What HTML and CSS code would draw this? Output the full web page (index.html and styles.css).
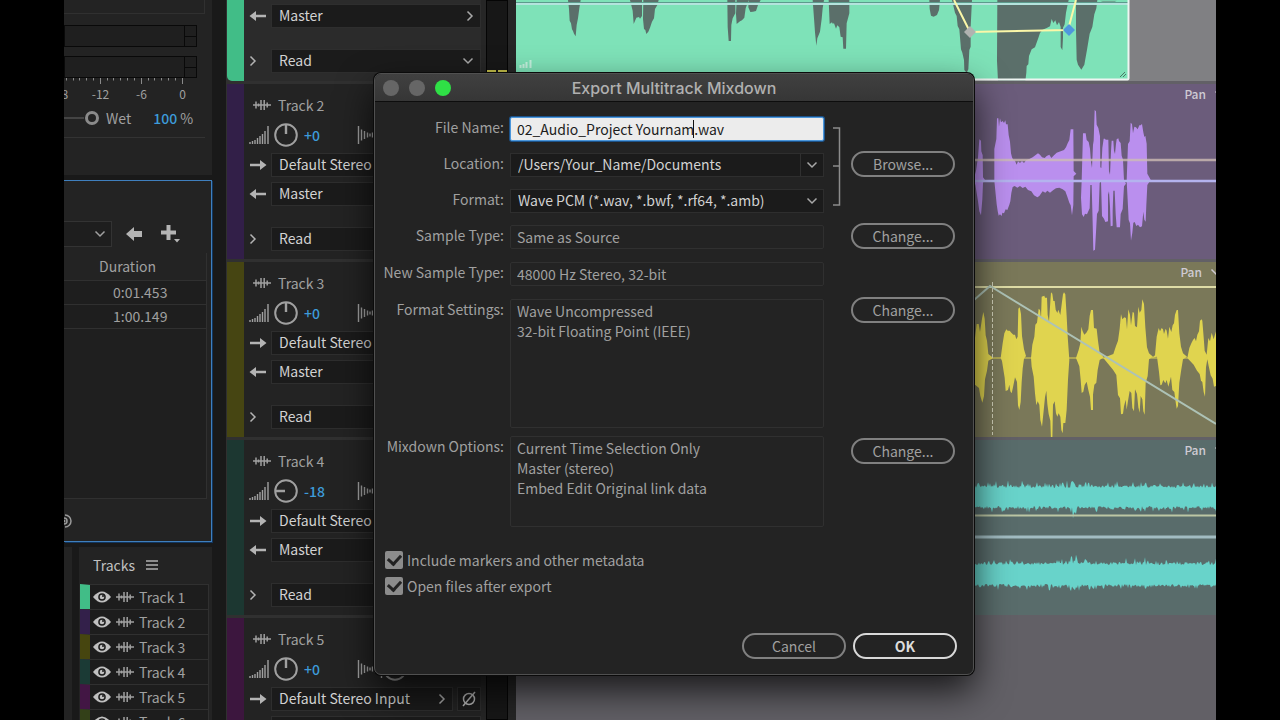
FILE: index.html
```html
<!DOCTYPE html>
<html lang="en">
<head>
    <meta charset="utf-8">
    <title>Export Multitrack Mixdown</title>
    <link rel="stylesheet" href="styles.css">
</head>
<body>
    <!-- shared icons -->
    <svg class="symbols">
        <symbol id="chev-down" viewBox="0 0 12 8"><path d="M1.500 1.500L6 6L10.500 1.500" fill="none" stroke="currentColor" stroke-width="1.500"/></symbol>
        <symbol id="chev-right" viewBox="0 0 8 12"><path d="M1.500 1.500L6 6L1.500 10.500" fill="none" stroke="currentColor" stroke-width="1.500"/></symbol>
        <symbol id="arrow-in" viewBox="0 0 18 12"><path d="M1 4.800h10V1l6.500 5-6.500 5V7.200H1z" fill="currentColor"/></symbol>
        <symbol id="arrow-out" viewBox="0 0 18 12"><path d="M17 4.800H7V1L.500 6 7 11V7.200h10z" fill="currentColor"/></symbol>
        <symbol id="wave" viewBox="0 0 18 12"><path d="M0 6h18M3 2.500v7M5.500 4.500v3M8 1v10M11.200 1v10M14.200 3.500v5" fill="none" stroke="currentColor" stroke-width="1.500"/></symbol>
        <symbol id="volume" viewBox="0 0 20 18"><path d="M1 18v-2M3.500 18v-3M6 18v-4M8.500 18v-6M11 18v-8M13.500 18v-10M16 18v-13M19 18V0" fill="none" stroke="currentColor" stroke-width="1.400"/></symbol>
        <symbol id="pan" viewBox="0 0 26 18"><path d="M1.500 0v18M4.500 3.500v11M7.500 5v8M10.500 6.500v5M13 7.500v3M15.500 6.500v5M18.500 5v8M21.500 3.500v11M24.500 0v18" fill="none" stroke="currentColor" stroke-width="1.400"/></symbol>
        <symbol id="knob" viewBox="0 0 24 24"><circle cx="12" cy="12" r="10.800" fill="none" stroke="currentColor" stroke-width="2"/><path d="M12 2v9" stroke="currentColor" stroke-width="2.400"/></symbol>
        <symbol id="eye" viewBox="0 0 18 12"><path d="M0 6Q9-5 18 6Q9 17 0 6z" fill="currentColor"/><circle cx="9" cy="6" r="3.800" fill="#1d1d1d"/><circle cx="9" cy="6" r="2.300" fill="currentColor"/><circle cx="10" cy="5" r="1" fill="#1d1d1d"/></symbol>
        <symbol id="phase" viewBox="0 0 16 16"><ellipse cx="8" cy="8" rx="5.500" ry="5.500" fill="none" stroke="currentColor" stroke-width="1.500"/><path d="M2 15L14 1" stroke="currentColor" stroke-width="1.500"/></symbol>
    </svg>

    <div class="app">
        <div class="sidebar">
            <section class="effects">
                <div class="effects-box"></div>
                <div class="level"><span></span></div>
                <div class="level"><span></span></div>
                <svg class="ticks" viewBox="0 0 134 6" width="134" height="6">
                    <path d="M2.500 0v2.500M9.500 0v2.500M15.500 0v2.500M22.500 0v2.500M29.500 0v2.500M43.500 0v2.500M49.500 0v2.500M56.500 0v2.500M63.500 0v2.500M70.500 0v2.500M84.500 0v2.500M90.500 0v2.500M97.500 0v2.500M104.500 0v2.500M111.500 0v2.500M36.500 0v6M77.500 0v6M118.500 0v6" stroke="#8a8a8a"/>
                </svg>
                <div class="scale"><span>-18</span><span>-12</span><span>-6</span><span>0</span></div>
                <div class="mix">
                    <span class="mix-line"></span>
                    <span class="mix-knob"></span>
                    <span>Wet</span>
                    <span class="mix-value"><b>100</b> %</span>
                </div>
            </section>

            <section class="files">
                <div class="files-tools">
                    <div class="files-filter"><svg width="12" height="8"><use href="#chev-down"/></svg></div>
                    <svg width="17" height="14" viewBox="0 0 17 14"><path d="M0 7l8-7v4h8v6H8v4z" fill="#b4b4b4"/></svg>
                    <svg width="20" height="18" viewBox="0 0 20 18"><path d="M5.500 0h4v5.500H15v4H9.500V15h-4V9.500H0v-4h5.500zM13 14h6l-3 3.500z" fill="#b4b4b4"/></svg>
                </div>
                <table class="files-table">
                    <thead><tr><th>Duration</th></tr></thead>
                    <tbody>
                        <tr><td>0:01.453</td></tr>
                        <tr><td>1:00.149</td></tr>
                    </tbody>
                </table>
                <div class="files-empty"></div>
                <div class="files-foot">
                    <svg width="9" height="14" viewBox="0 0 9 14"><path d="M1 1a6 6 0 0 1 0 12M0 4a3 3 0 0 1 0 6" fill="none" stroke="#9a9a9a" stroke-width="1.500"/><circle cx="0" cy="7" r="1.500" fill="#9a9a9a"/></svg>
                </div>
            </section>

            <section class="bottom">
                <div class="bottom-cut"></div>
                <div class="track-index">
                    <h2>Tracks <svg width="12" height="10" viewBox="0 0 12 10"><path d="M0 1h12M0 5h12M0 9h12" stroke="#b0b0b0" stroke-width="1.500"/></svg></h2>
                    <ul>
                        <li class="green"><svg width="18" height="12"><use href="#eye"/></svg><svg width="18" height="12"><use href="#wave"/></svg>Track 1</li>
                        <li class="purple"><svg width="18" height="12"><use href="#eye"/></svg><svg width="18" height="12"><use href="#wave"/></svg>Track 2</li>
                        <li class="olive"><svg width="18" height="12"><use href="#eye"/></svg><svg width="18" height="12"><use href="#wave"/></svg>Track 3</li>
                        <li class="teal"><svg width="18" height="12"><use href="#eye"/></svg><svg width="18" height="12"><use href="#wave"/></svg>Track 4</li>
                        <li class="plum"><svg width="18" height="12"><use href="#eye"/></svg><svg width="18" height="12"><use href="#wave"/></svg>Track 5</li>
                        <li class="moss"><svg width="18" height="12"><use href="#eye"/></svg><svg width="18" height="12"><use href="#wave"/></svg>Track 6</li>
                    </ul>
                </div>
            </section>
        </div>

        <div class="tracks">
            <div class="track green selected">
                <div class="row"><svg width="18" height="12"><use href="#arrow-out"/></svg><div class="pick"><select aria-label="Track 1 output"><option>Master</option></select><svg width="8" height="12"><use href="#chev-right"/></svg></div></div>
                <div class="row automation"><svg width="8" height="12"><use href="#chev-right"/></svg><div class="pick"><select aria-label="Track 1 automation"><option>Read</option></select><svg width="12" height="8"><use href="#chev-down"/></svg></div></div>
            </div>
            <div class="track purple">
                <div class="name"><svg width="18" height="12"><use href="#wave"/></svg>Track 2</div>
                <div class="gain"><svg width="20" height="18"><use href="#volume"/></svg><svg class="knob" width="24" height="24"><use href="#knob"/></svg><b>+0</b><svg width="26" height="18"><use href="#pan"/></svg><svg width="24" height="24"><use href="#knob"/></svg></div>
                <div class="row"><svg width="18" height="12"><use href="#arrow-in"/></svg><div class="pick"><select aria-label="Track 2 input"><option>Default Stereo Input</option></select></div></div>
                <div class="row"><svg width="18" height="12"><use href="#arrow-out"/></svg><div class="pick"><select aria-label="Track 2 output"><option>Master</option></select></div></div>
                <div class="row automation"><svg width="8" height="12"><use href="#chev-right"/></svg><div class="pick"><select aria-label="Track 2 automation"><option>Read</option></select></div></div>
            </div>
            <div class="track olive">
                <div class="name"><svg width="18" height="12"><use href="#wave"/></svg>Track 3</div>
                <div class="gain"><svg width="20" height="18"><use href="#volume"/></svg><svg class="knob" width="24" height="24"><use href="#knob"/></svg><b>+0</b><svg width="26" height="18"><use href="#pan"/></svg><svg width="24" height="24"><use href="#knob"/></svg></div>
                <div class="row"><svg width="18" height="12"><use href="#arrow-in"/></svg><div class="pick"><select aria-label="Track 3 input"><option>Default Stereo Input</option></select></div></div>
                <div class="row"><svg width="18" height="12"><use href="#arrow-out"/></svg><div class="pick"><select aria-label="Track 3 output"><option>Master</option></select></div></div>
                <div class="row automation"><svg width="8" height="12"><use href="#chev-right"/></svg><div class="pick"><select aria-label="Track 3 automation"><option>Read</option></select></div></div>
            </div>
            <div class="track teal">
                <div class="name"><svg width="18" height="12"><use href="#wave"/></svg>Track 4</div>
                <div class="gain"><svg width="20" height="18"><use href="#volume"/></svg><svg class="knob low" width="24" height="24"><use href="#knob"/></svg><b>-18</b><svg width="26" height="18"><use href="#pan"/></svg><svg width="24" height="24"><use href="#knob"/></svg></div>
                <div class="row"><svg width="18" height="12"><use href="#arrow-in"/></svg><div class="pick"><select aria-label="Track 4 input"><option>Default Stereo Input</option></select></div></div>
                <div class="row"><svg width="18" height="12"><use href="#arrow-out"/></svg><div class="pick"><select aria-label="Track 4 output"><option>Master</option></select></div></div>
                <div class="row automation"><svg width="8" height="12"><use href="#chev-right"/></svg><div class="pick"><select aria-label="Track 4 automation"><option>Read</option></select></div></div>
            </div>
            <div class="track plum">
                <div class="name"><svg width="18" height="12"><use href="#wave"/></svg>Track 5</div>
                <div class="gain"><svg width="20" height="18"><use href="#volume"/></svg><svg class="knob" width="24" height="24"><use href="#knob"/></svg><b>+0</b><svg width="26" height="18"><use href="#pan"/></svg><svg width="24" height="24"><use href="#knob"/></svg></div>
                <div class="row"><svg width="18" height="12"><use href="#arrow-in"/></svg><div class="pick"><select aria-label="Track 5 input"><option>Default Stereo Input</option></select><svg width="8" height="12"><use href="#chev-right"/></svg></div><button class="phase" aria-label="Invert phase"><svg width="16" height="16"><use href="#phase"/></svg></button></div>
                <div class="row"><svg width="18" height="12"><use href="#arrow-out"/></svg><div class="pick"><select aria-label="Track 5 output"><option>Master</option></select></div></div>
            </div>
        </div>
        <div class="meters"><span></span></div>

        <div class="timeline">
            <div class="lane lane-green">
                <svg viewBox="0 0 700 81" preserveAspectRatio="none">
                    <rect width="613" height="79" fill="#7ee2b8"/>
                    <g transform="translate(-36 0) scale(.33333)" fill="#5b6f6a">
                        <path d="M264 0h38l-4 25-4 30-4 20-3 34-5-8-3-8-3-5-3-18-4-8-2-35z"/>
                        <path d="M450 0h36v48l-6 8-3-5-8 2-4 10-4 9-3-40zM490 0h46l-4 15-7 12-3 28-6 10-6 18-5 12-6 7-3-12-4-3-3-30z"/>
                        <path d="M742 0h24v40l-8 15-4 20-1 48-7 0-3-42zM770 0h36l-9 25-4 28-7 8-6 3-10 8-2-30zM806 0h36l-8 15-6 18-9 2-8 1-6-14z"/>
                        <path d="M998 0h34l-4 25-3 32-5 38-8 20-3 22-4-40-3-42zM1046 0h62v40l-8 30-2 76h-8l-2-34-6-2-4-28-6-6-4 10-6-16-4 1-2-4-7 5z"/>
                    </g>
                    <g transform="translate(334 0) scale(.33333)" fill="#5b6f6a">
                        <path d="M238 0h32l-3 30-6 15-10 5-8-3-4-20z"/>
                        <path d="M306 0h60l-4 80 0 60-4 10-3 58-5 10-7-8-1-30-5-22-4-10-5-60-5-10-3-30-5-10z"/>
                        <path d="M442 0h214l-4 18-4 20-4 35-5 10v30l-2 38-5-10v-60l-5-15-6 10-5-15-6 8-5-12-5 22-10 5-12 5-8 10-5 15-10 28-10 6-8 20-2 25-5 5-1 20-3 25-4 10v10h-77l-4-80z"/>
                        <path d="M678 0h64l-3 25-6 18-6 38-8 20-8 48-8 45-9 15-10-15-4-15-2-90z"/>
                        <path d="M750 2h50l-10 7-15 4-10-4z" fill="#6da791"/>
                    </g>
                    <path d="M0 2.500h613" stroke="#5d9b8d"/>
                    <path d="M0 4h613" stroke="#b4e3dd" stroke-width="2"/>
                    <path d="M438 0L454 32L552 30L560 0" fill="none" stroke="#fbf7a8" stroke-width="2"/>
                    <path d="M454 26l6 6-6 6-6-6z" fill="#b0b2b0"/>
                    <path d="M553 24l6 6-6 6-6-6z" fill="#4f97dd"/>
                    <path d="M4.500 68v-3M7.500 68v-4M10.500 68v-6M14.500 68v-8" stroke="#c4f0dd" stroke-width="2"/>
                    <path d="M604 77l5-5M607 77l3-3" stroke="#4a7a66"/>
                    <path d="M0 79.500h611.500q1 0 1-1V0" fill="none" stroke="#eef5f2" stroke-width="2"/>
                </svg>
            </div>
            <div class="lane lane-purple">
                <svg viewBox="0 0 700 175" preserveAspectRatio="none">
                    <g transform="translate(444 -24) scale(.33333)" fill="#ba8fee">
                        <path d="M40 362l8-30 6-40 4-54 5 4 1 32 4 12 1 66 6 8-6 8-2 50-4 48-5-12-4-30-8-50z"/>
                        <path d="M103 362v-95l6-30 2-62 4 0 2 25 3-25 3 12 5-4 4 6 4-8 2 12 5 0 3 32 4 20 3 35 3 12 4 8 5 2 5 12 4-10 6 5 6-6 6 6 6-8 10-4 10-5 8-6 8-6 6 4 6 8 8 2 6-6 8-4 6 10 8-8 8-8 12-4 10-4 6-8 5-12 5-10 4-32 8 0 1 125 8 8-8 8-1 85-4 32-4-30-4-8-6-18-6-16-8-6-10-5-10 2-8 5-10 8-8-6-6 6-8-4-10 14-6 4-10-6-8-12-10-4-8-10-8 4-8-6-8 5-8-5-6 3-4 18-3 25-3 10-6 16-5-2-5 12-5-2-2 10-5-5-4 4-3-14-3-20-6-60z"/>
                        <path d="M365 362l4-142 8 0 3 20 6 6 4 20 3 40 3 18 3-70 2-12 3-92 4 4 2 40 5 10 5 24 1 94 3 2 3-60 4-28 4 0 2 3 8 0 2 95 3 10 3-70 2-32 5 0 2 30 3 10 3-30 2-14 5-3 2 8 5 6 3 38 4 12 3 62 6 10-6 8-4 68-6 15-2 40-10 0-3-40-3-70-4 0-2 60v45l-6 2-2-60-3-45-3 10v80l-8 2-4-10-6-8-3-104-4 4-3 84-5 10-3 55-3 52-5 3-2-82-3-115-4 0-2 70-8 18-6-2-4 10-5-8-3-50z"/>
                        <path d="M500 362l4-110 5-8 3-56 4 4 3 28 4-20 5 2 5 6 5-12 4 0 4-4 4 25 3 14 3-4 4 24 2 90 10 18-10 16-3 60-2 50-4-6-3-24-4 44-6 3-6-8-5 4-5-12-4 2-3 30-4 24-3-52-4-10-3-60z"/>
                    </g>
                    <path d="M458 76h242" stroke="#cdbcb4" stroke-opacity=".8" stroke-width="2.500"/>
                    <path d="M458 97h242" stroke="#b4b3ee" stroke-width="2.500"/>
                </svg>
                <div class="lane-label">Pan <svg width="12" height="8"><use href="#chev-down"/></svg></div>
            </div>
            <div class="lane lane-olive">
                <svg viewBox="0 0 700 175" preserveAspectRatio="none">
                    <path d="M444 96h256" stroke="#e0d350"/>
                    <g transform="translate(444 -12) scale(.33333)" fill="#e0d44f">
                        <path d="M30 324l15-60 5-42 6 0 4 24 6-40 4-20 4 20 3 50 4 16 4 40 15 12-15 8-4 30-6 26-3 50-5 20-6-20-4-24-12-10-10-50z"/>
                        <path d="M122 324l6-44 5-30 6-12 4 4 6 0 5 6 6 6 5 0 4 14 4-8 2-84 4-4 4 20 3 66 6 40 6 20-6 8-4 30-3 40-3 60-4 24-4-14-3-70-6-14-6 30-4 18-4-6-3-20-4 16-7 3-3-40-8-50z"/>
                        <path d="M213 324l4-40 6-24 3-36 5-6 5-42 4 4 3 26 2-66 8-3 2 6 6 0 2 52 4 20 4-60 2-28 4 4 3 22 4 0 3 26 5 10 3-10 6 16 5-40 3-22 3-6 4 6 4 66 3 60 5 70-4 60-4 90-4 40-6 0-2 31-4-10-3-40-5-10-4 10-4-10-4-36-5 10-2 108-4 0-2-60-5-20-4-30-3-40-4 20-4 40-5 48-5-20-3-46-5-10-4 12-4-36-4-50-6-30z"/>
                        <path d="M348 324l8-24 5-20 3-50 4 14 5 10 6-6 6-10 4-40 4-18 6 0 3 54 8 2 4 36 5 36 12 14-12 8-6 30-4 38-6 6-4 30v46l-6 0-3-40-5-20-5-25-6 10-4 20-5 4-3-40-4-40z"/>
                        <path d="M430 324l30-12 8-24 6-16 5-36 4-44 4 16 6-6 5 2 3 34 4-60 5 16 3 32 5-40 4 2 3 40 6 4 4-62 4 18 5-8 3-32 5 14 4 70 5 60 6 18 12 10-12 8-4 50-6 20-3 96-4-10-3-36-5-10-3 50-4-16-4-40-6-14-3 66-5-10-3-45-5-6-5 30-4 26-3-30-5 20-3 22-6 2-3-48-6-10-5-60-10-16z"/>
                        <path d="M575 324l10-8 5-56 6-26 4 10 5-10 4 4 3 14 5-16 3 6 4 24 4-36 6 16 4-20 4-6 3-26 5-14 4 0 4 70 5 40 6 20 12 10-12 8-5 30-6 40-4 70-4 8-3-20-4-30-6-6-4-40-4 16-4 14-5-20-4 10-6-10-5 14-4 2-4-40-6-46z"/>
                        <path d="M682 324l6-30 6-14 5-10 5-6 4 10 4-20 5-10 3-32 5-4 2 4 4 50 3 40 6 12 5-50 5 10 5-26 6 20 7-24v164l-6 2-4-24-6-10-6-28-4-20-4 24-3 88-4-14-4-30-4-4-4-20-8-10-10-18z"/>
                    </g>
                    <path d="M458 25h242" stroke="#dedca6" stroke-width="2"/>
                    <path d="M458 38L474 24L700 162" fill="none" stroke="#adc2b6" stroke-width="2"/>
                    <path d="M476.500 20v153" stroke="#d0d0b8" stroke-dasharray="4 2"/>
                </svg>
                <div class="lane-label wide">Pan <svg width="12" height="8"><use href="#chev-down"/></svg></div>
            </div>
            <div class="lane lane-teal">
                <svg viewBox="0 0 700 175" preserveAspectRatio="none">
                    <path class="noise" data-top="48" data-bottom="66" fill="#68d3ca"/>
                    <path class="noise" data-top="125" data-bottom="144" fill="#68d3ca"/>
                    <path d="M458 75.500h242" stroke="#bcc6a4" stroke-width="2"/>
                    <path d="M458 97h242" stroke="#a2bcc2" stroke-width="3"/>
                </svg>
                <div class="lane-label">Pan <svg width="12" height="8"><use href="#chev-down"/></svg></div>
            </div>
        </div>

        <form class="dialog" onsubmit="return false">
            <header class="titlebar">
                <i></i><i></i><i class="zoom"></i>
                <h1>Export Multitrack Mixdown</h1>
            </header>
            <div class="fields">
                <label for="file">File Name:</label>
                <div class="file"><input id="file" type="text" value="02_Audio_Project Yournam.wav"><span class="caret"></span></div>
                <svg class="bracket" width="8" height="80" viewBox="0 0 8 80"><path d="M0 1h6.500v77H0M0 39h6" fill="none" stroke="#8c8c8c" stroke-width="1.500"/></svg>

                <label for="location">Location:</label>
                <div class="pick split"><select id="location"><option>/Users/Your_Name/Documents</option></select><svg width="12" height="8"><use href="#chev-down"/></svg></div>
                <button type="button">Browse...</button>

                <label for="format">Format:</label>
                <div class="pick"><select id="format"><option>Wave PCM (*.wav, *.bwf, *.rf64, *.amb)</option></select><svg width="12" height="8"><use href="#chev-down"/></svg></div>

                <label for="sample">Sample Type:</label>
                <input id="sample" type="text" value="Same as Source" readonly>
                <button type="button">Change...</button>

                <label for="newsample">New Sample Type:</label>
                <input id="newsample" type="text" value="48000 Hz Stereo, 32-bit" readonly>

                <label for="settings">Format Settings:</label>
                <textarea id="settings" readonly>Wave Uncompressed
32-bit Floating Point (IEEE)</textarea>
                <button type="button">Change...</button>

                <label for="options">Mixdown Options:</label>
                <textarea id="options" readonly>Current Time Selection Only
Master (stereo)
Embed Edit Original link data</textarea>
                <button type="button" class="lower">Change...</button>
            </div>
            <div class="checks">
                <label><input type="checkbox" checked>Include markers and other metadata</label>
                <label><input type="checkbox" checked>Open files after export</label>
            </div>
            <footer class="actions">
                <button type="button">Cancel</button>
                <button type="submit" class="ok">OK</button>
            </footer>
        </form>
    </div>
    <script src="script.js"></script>
</body>
</html>
```
FILE: styles.css
```css
* {
    box-sizing: border-box;
}
body {
    margin: 0;
    padding: 0 5%;
    height: 100vh;
    overflow: hidden;
    background-color: #000;
    color: #a0a0a0;
    font-family: "Noto Sans CJK SC", "Noto Sans", sans-serif;
    font-size: 14px;
    line-height: 20px;
}
.symbols {
    display: none;
}
svg {
    display: block;
    flex: none;
}
input, select, textarea, button {
    font: inherit;
    color: inherit;
}
.app {
    position: relative;
    display: flex;
    height: 100%;
    overflow: hidden;
    background-color: #191919;
}

/* left column */
.sidebar {
    display: flex;
    flex-direction: column;
    flex: none;
    width: 148px;
    margin-right: 14px;
}
.effects {
    height: 175px;
    margin-bottom: 5px;
    background-color: #232323;
}
.effects-box {
    height: 14px;
    width: 141px;
    margin-bottom: 11px;
    border: 1px solid #303030;
    border-width: 0 1px 1px 0;
}
.level {
    display: flex;
    justify-content: flex-end;
    width: 133px;
    height: 22px;
    margin-bottom: 9px;
    border: 1px solid #090909;
    background-color: #1f1f1f;
}
.level + .level {
    margin-bottom: 0;
}
.level span {
    width: 12px;
    border-left: 1px solid #090909;
    background: linear-gradient(#090909, #090909) 0 10px / 100% 1px no-repeat;
}
.scale {
    display: grid;
    grid-template-columns: repeat(4, 41px);
    margin-left: -25px;
    font-size: 12px;
    text-align: center;
    clip-path: inset(0 0 0 25px);
}
.mix {
    display: flex;
    align-items: center;
    height: 34px;
    width: 141px;
    padding-bottom: 6px;
    border-bottom: 1px solid #333;
}
.mix-line {
    width: 20px;
    height: 2px;
    background-color: #444;
}
.mix-knob {
    width: 14px;
    height: 14px;
    margin: 0 7px 0 1px;
    border: 3px solid #8a8a8a;
    border-radius: 50%;
}
.mix-value {
    margin-left: 22px;
}
.mix-value b {
    color: #3d9bd9;
    font-weight: 500;
}
.files {
    height: 362px;
    margin-bottom: 5px;
    padding-top: 40px;
    border: 1px solid #3f7fbd;
    border-left: 0;
    box-shadow: 1px 1px 0 #12355c;
    background-color: #232323;
}
.files-tools {
    display: flex;
    align-items: center;
    height: 26px;
    margin-bottom: 6px;
}
.files-filter {
    display: flex;
    align-items: center;
    justify-content: flex-end;
    width: 48px;
    height: 26px;
    margin-right: 14px;
    padding-right: 5px;
    border: 1px solid #333;
    border-left: 0;
    background-color: #1e1e1e;
}
.files-tools svg + svg {
    margin-left: 18px;
}
.files-table {
    width: 143px;
    border-collapse: collapse;
    border-right: 1px solid #303030;
}
.files-table th {
    height: 27px;
    padding: 0 0 0 35px;
    text-align: left;
    font-weight: 400;
}
.files-table td {
    height: 24px;
    padding: 0 0 0 49px;
    border: 1px solid #303030;
    border-width: 1px 0;
    background-color: #1e1e1e;
}
.files-empty {
    width: 143px;
    height: 170px;
    border: 1px solid #303030;
    border-width: 0 1px 1px 0;
    background-color: #1f1f1f;
}
.files-foot {
    display: flex;
    align-items: center;
    height: 44px;
}
.bottom {
    display: flex;
    flex: 1;
    min-height: 0;
}
.bottom-cut {
    width: 8px;
    margin-right: 7px;
    background-color: #232323;
}
.track-index {
    flex: 1;
    overflow: hidden;
    background-color: #232323;
}
.track-index h2 {
    display: flex;
    align-items: center;
    gap: 11px;
    height: 37px;
    margin: 0;
    padding: 0 0 2px 14px;
    color: #c0c0c0;
    font-size: 14px;
    font-weight: 400;
}
.track-index ul {
    margin: 0 3px 0 1px;
    padding: 0;
    list-style: none;
}
.track-index li {
    display: flex;
    align-items: center;
    gap: 5px;
    height: 25px;
    padding: 0 0 1px 3px;
    border: 1px solid #303030;
    border-width: 1px 1px 0 0;
    border-left: 10px solid #333;
    background-color: #1d1d1d;
}
.track-index li svg:first-child {
    color: #c0c0c0;
}
.track-index li.green { border-left-color: #41bd87; }
.track-index li.purple { border-left-color: #33204a; }
.track-index li.olive { border-left-color: #46450f; }
.track-index li.teal { border-left-color: #1b3a35; }
.track-index li.plum { border-left-color: #421644; }
.track-index li.moss { border-left-color: #334018; }

/* track headers */
.tracks {
    display: flex;
    flex-direction: column;
    flex: none;
    gap: 3px;
    width: 255px;
    background-color: #303030;
    overflow: hidden;
}
.track {
    flex: none;
    height: 175px;
    margin-left: 1px;
    padding: 10px 0 0 5px;
    border-left: 17px solid #333;
    background-color: #232323;
}
.track.selected {
    height: 81px;
    padding-top: 4px;
    background-color: #2b2b2b;
    border-bottom-left-radius: 5px;
}
.track.green { border-left-color: #41bd87; }
.track.purple { border-left-color: #321f48; }
.track.olive { border-left-color: #464512; }
.track.teal { border-left-color: #1c3731; }
.track.plum { border-left-color: #3c163e; }
.name {
    display: flex;
    align-items: center;
    gap: 7px;
    height: 22px;
    padding-left: 4px;
}
.gain {
    display: flex;
    align-items: center;
    height: 37px;
}
.gain .knob {
    margin: 0 6px 0 5px;
}
.gain .low {
    transform: rotate(-90deg);
}
.gain b {
    width: 53px;
    color: #3d9bd9;
    font-weight: 500;
}
.row {
    display: flex;
    align-items: center;
    gap: 4px;
    height: 24px;
    margin-bottom: 5px;
    color: #b4b4b4;
}
.row.automation {
    margin-top: 21px;
    gap: 14px;
}
.pick {
    display: flex;
    align-items: center;
    position: relative;
    flex: 1;
    height: 24px;
    border: 1px solid #2e2e2e;
    background-color: #1b1b1b;
}
.pick select {
    appearance: none;
    width: 100%;
    height: 100%;
    padding: 0 7px 2px;
    border: 0;
    background: none;
    color: #d2d2d2;
}
/* chevron lies over the select */
.pick svg {
    position: absolute;
    right: 6px;
    color: #a8a8a8;
}
.phase {
    display: flex;
    align-items: center;
    justify-content: center;
    width: 24px;
    height: 24px;
    padding: 0;
    border: 1px solid #2e2e2e;
    background-color: #1b1b1b;
}
.meters {
    flex: none;
    width: 35px;
    padding: 0 8px 0 5px;
    background-color: #262626;
}
.meters span {
    display: block;
    height: 100%;
    border: 1px solid #050505;
    background:
        linear-gradient(#171717, #171717) 50% 68px / 2px 3px no-repeat,
        linear-gradient(#c3bd49, #c3bd49) 0 69px / 100% 2px no-repeat #171717;
}

/* timeline */
.timeline {
    display: flex;
    flex-direction: column;
    flex: 1;
    gap: 3px;
    background-color: #626066;
}
.lane {
    position: relative;
    flex: none;
    height: 175px;
    overflow: hidden;
}
.lane > svg {
    width: 100%;
    height: 100%;
}
.lane-green {
    height: 81px;
    background-color: #808083;
}
.lane-purple { background-color: #6b5c7b; }
.lane-olive { background-color: #7a7859; }
.lane-teal { background-color: #596c6b; }
.lane-label {
    display: flex;
    align-items: center;
    gap: 8px;
    position: absolute;
    top: 0;
    right: -10px;
    color: #cfcbd3;
    font-size: 12px;
    font-weight: 500;
}
.lane-label.wide {
    right: -6px;
}

/* export dialog */
.dialog {
    position: absolute;
    top: 73px;
    left: 310px;
    width: 600px;
    border: 1px solid #505050;
    border-radius: 7px;
    overflow: hidden;
    background-color: #232323;
    box-shadow: 0 0 0 1px #0b0b0b, 0 16px 36px rgba(0, 0, 0, 0.75);
}
.titlebar {
    display: flex;
    align-items: center;
    gap: 10px;
    position: relative;
    height: 28px;
    padding-left: 8px;
    border-bottom: 1px solid #0d0d0d;
    background: linear-gradient(#404040, #363636);
}
.titlebar i {
    width: 16px;
    height: 16px;
    border-radius: 50%;
    background-color: #666;
}
.titlebar .zoom {
    background-color: #2fe046;
}
.titlebar h1 {
    position: absolute;
    left: 0;
    right: 0;
    margin: 0;
    color: #b0b0b0;
    font-family: Inter, Roboto, sans-serif;
    font-size: 16px;
    font-weight: 500;
    text-align: center;
}
.fields {
    display: grid;
    grid-template-columns: 119px 1fr 15px 104px;
    grid-template-rows: 28px 28px 28px 29px 29px 129px 91px;
    gap: 8px 6px;
    align-items: start;
    padding: 15px 18px 0 10px;
}
.fields label {
    display: flex;
    justify-content: flex-end;
    grid-column: 1;
    white-space: nowrap;
}
.fields input, .fields textarea {
    display: block;
    width: 100%;
    height: 24px;
    margin: 0;
    padding: 0 6px 1px;
    border: 1px solid #303030;
    border-radius: 2px;
    background: none;
    outline: 0;
    resize: none;
}
.fields textarea {
    height: 100%;
    padding-top: 1px;
}
.fields .file {
    position: relative;
}
.fields .file input {
    border-color: #4b97dc;
    box-shadow: 0 0 0 1px #1d5288;
    background-color: #ececec;
    color: #1c1c1c;
}
.caret {
    position: absolute;
    top: 3px;
    left: 183px;
    width: 1px;
    height: 18px;
    background-color: #111;
}
.fields .split select {
    width: 290px;
    flex: none;
    border-right: 1px solid #303030;
}
.fields .pick svg {
    right: 5px;
}
.bracket {
    grid-column: 3;
    grid-row: 1 / 4;
    margin: 10px 0 0 3px;
}
.dialog button {
    height: 26px;
    width: 104px;
    padding: 0 0 1px;
    border: 2px solid #808080;
    border-radius: 13px;
    background: none;
    line-height: 20px;
}
.fields button {
    grid-column: 4;
    margin-top: -2px;
}
.fields .lower {
    margin-top: 2px;
}
.checks {
    display: grid;
    gap: 6px;
    padding: 23px 0 0 10px;
}
.checks label {
    display: flex;
    align-items: center;
    gap: 4px;
}
.checks input {
    appearance: none;
    display: grid;
    place-items: center;
    width: 18px;
    height: 18px;
    margin: 0;
    border-radius: 2px;
    background-color: #8c8c8c;
}
.checks input::after {
    content: "";
    width: 6px;
    height: 10px;
    margin-bottom: 3px;
    border: solid #232323;
    border-width: 0 3px 3px 0;
    transform: rotate(42deg);
}
.actions {
    display: flex;
    justify-content: flex-end;
    gap: 7px;
    padding: 37px 16px 15px;
}
.dialog .ok {
    border-color: #d8d8d8;
    color: #dcdcdc;
    font-weight: 700;
}
```
FILE: script.js
```js
// steady noise for the two channels of track 4
let seed = 7;

function random() {
    seed = (seed * 16807) % 2147483647;
    return seed / 2147483647;
}

function edge(base, sign) {
    const points = [];
    for (let x = 456; x <= 700; x++) {
        const spike = random() > 0.8 ? 5 : 0;
        const swell = x > 554 && x < 561 ? 6 : 0;
        const y = base + sign * (random() * 3 + spike * random() + swell * random());
        points.push(`${x} ${y.toFixed(1)}`);
    }
    return points;
}

document.querySelectorAll('.noise').forEach(path => {
    const top = edge(Number(path.dataset.top), -1);
    const bottom = edge(Number(path.dataset.bottom), 1).reverse();
    path.setAttribute('d', `M${top.concat(bottom).join('L')}z`);
});
```
